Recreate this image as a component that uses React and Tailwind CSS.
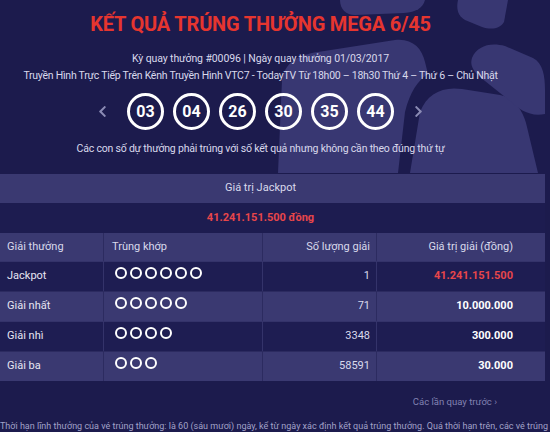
import React from 'react';
import { FaChevronLeft, FaChevronRight } from 'react-icons/fa';

const balls = ['03', '04', '26', '30', '35', '44'];

const prizes = [
  { name: 'Jackpot', match: 6, count: '1', value: '41.241.151.500', red: true },
  { name: 'Giải nhất', match: 5, count: '71', value: '10.000.000' },
  { name: 'Giải nhì', match: 4, count: '3348', value: '300.000' },
  { name: 'Giải ba', match: 3, count: '58591', value: '30.000' },
];

// soccer-ball patches behind the header
const BallPattern = () => (
  <svg className="absolute left-0 top-0" width="545" height="173" viewBox="0 0 545 173">
    <g fill="#383772">
      <path d="M282 80 C285 62 298 55 318 52 L395 40 C412 38 422 48 425 62 L428 74 C418 80 410 92 405 112 L398 173 L278 173 Z" />
      <path d="M420 112 C427 94 442 86 462 89 L500 95 C515 98 524 112 527 127 L538 173 L410 173 Z" />
      <path d="M472 58 C477 46 490 42 505 46 L533 58 C543 63 545 76 545 90 L545 114 C530 117 520 110 510 101 L480 77 C472 70 470 64 472 58 Z" />
      <path d="M340 0 L425 0 C423 8 416 12 404 13 L355 15 C346 15 340 9 340 0 Z" />
      <path d="M458 0 L508 0 L504 22 C500 29 491 30 482 27 L465 20 C458 16 456 9 458 0 Z" />
    </g>
  </svg>
);

const Rings = ({ n }) => (
  <div className="flex gap-[3px]">
    {Array.from({ length: n }).map((_, i) => (
      <span key={i} className="w-[12px] h-[12px] rounded-full border-2 border-white" />
    ))}
  </div>
);

export default function App() {
  return (
    <div className="w-[550px] h-[432px] overflow-hidden bg-[#1c1b4d] text-[#d9d9ec]" style={{ fontFamily: 'Roboto, "Noto Sans", sans-serif' }}>
      <div className="w-[545px]">
        {/* Header */}
        <div className="relative h-[173px] overflow-hidden">
          <BallPattern />
          <div className="relative w-[521px] flex flex-col items-center">
            <h1 className="mt-[12px] text-[20px] leading-[24px] font-bold text-[#e6352f] tracking-[-0.2px]">
              KẾT QUẢ TRÚNG THƯỞNG MEGA 6/45
            </h1>
            <p className="mt-[16px] text-[10.5px] leading-[14px] tracking-[-0.1px]">Kỳ quay thưởng #00096 | Ngày quay thưởng 01/03/2017</p>
            <p className="mt-[3px] text-[10.5px] leading-[14px] tracking-[-0.25px] whitespace-nowrap">
              Truyền Hình Trực Tiếp Trên Kênh Truyền Hình VTC7 - TodayTV Từ 18h00 – 18h30 Thứ 4 – Thứ 6 – Chủ Nhật
            </p>
            <div className="mt-[10px] flex items-center gap-[9px]">
              <FaChevronLeft className="text-[#8b8bb4] text-[13px] mr-[9px]" />
              {balls.map((b) => (
                <div key={b} className="w-[37px] h-[37px] rounded-full border-[3px] border-white flex items-center justify-center text-white font-bold text-[16px]">
                  {b}
                </div>
              ))}
              <FaChevronRight className="text-[#8b8bb4] text-[13px] ml-[9px]" />
            </div>
            <p className="mt-[12px] text-[10.5px] leading-[14px] tracking-[-0.2px]">Các con số dự thưởng phải trúng với số kết quả nhưng không cần theo đúng thứ tự</p>
          </div>
        </div>

        {/* Jackpot */}
        <div className="h-[29px] mt-px bg-[#3a3971] flex items-center justify-center pr-[24px] text-[11px]">Giá trị Jackpot</div>
        <div className="h-[30px] bg-[#1d1c50] flex items-center justify-center pr-[24px] text-[11px] font-bold text-[#e8464a]">
          41.241.151.500 đồng
        </div>

        {/* Table */}
        <div className="grid grid-cols-[104px_159px_114px_1fr] text-[11px]">
          <div className="h-[28px] bg-[#3a3971] border-r border-[#2c2b60] flex items-center pl-[7px]">Giải thưởng</div>
          <div className="h-[28px] bg-[#3a3971] border-r border-[#2c2b60] flex items-center pl-[8px]">Trùng khớp</div>
          <div className="h-[28px] bg-[#3a3971] border-r border-[#2c2b60] flex items-center justify-end pr-[6px]">Số lượng giải</div>
          <div className="h-[28px] bg-[#3a3971] flex items-center justify-end pr-[32px]">Giá trị giải (đồng)</div>
          {prizes.map((p, i) => {
            const bg = i % 2 === 0 ? 'bg-[#1e1d52] border-[#34336a]' : 'bg-[#3a3971] border-[#2c2b60]';
            return (
              <React.Fragment key={p.name}>
                <div className={`h-[30px] border-r border-t ${bg} flex items-center pl-[7px] text-[#e6e6f2]`}>{p.name}</div>
                <div className={`h-[30px] border-r border-t ${bg} flex items-start pt-[5px] pl-[11px]`}>
                  <Rings n={p.match} />
                </div>
                <div className={`h-[30px] border-r border-t ${bg} flex items-center justify-end pr-[6px]`}>{p.count}</div>
                <div className={`h-[30px] border-t ${bg} flex items-center justify-end pr-[32px] font-bold ${p.red ? 'text-[#e8464a]' : 'text-white'}`}>
                  {p.value}
                </div>
              </React.Fragment>
            );
          })}
        </div>

        <div className="h-[40px] flex items-center justify-end pr-[48px] pt-[2px] text-[9.5px] text-[#8282b2]">Các lần quay trước ›</div>
        <p className="text-[9px] leading-[11px] text-[#a2a2c8] whitespace-nowrap">
          Thời hạn lĩnh thưởng của vé trúng thưởng: là 60 (sáu mươi) ngày, kể từ ngày xác định kết quả trúng thưởng. Quá thời hạn trên, các vé trúng
        </p>
      </div>
    </div>
  );
}
